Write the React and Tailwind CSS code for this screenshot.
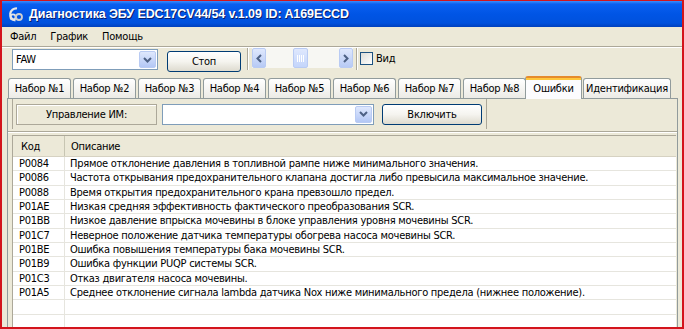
import React from "react";

const rows = [
  ["P0084", "Прямое отклонение давления в топливной рампе ниже минимального значения."],
  ["P0086", "Частота открывания предохранительного клапана достигла либо превысила максимальное значение."],
  ["P0088", "Время открытия предохранительного крана превзошло предел."],
  ["P01AE", "Низкая средняя эффективность фактического преобразования SCR."],
  ["P01BB", "Низкое давление впрыска мочевины в блоке управления уровня мочевины SCR."],
  ["P01C7", "Неверное положение датчика температуры обогрева насоса мочевины SCR."],
  ["P01BE", "Ошибка повышения температуры бака мочевины SCR."],
  ["P01B9", "Ошибка функции PUQP системы SCR."],
  ["P01C3", "Отказ двигателя насоса мочевины."],
  ["P01A5", "Среднее отклонение сигнала lambda датчика Nox ниже минимального предела (нижнее положение)."],
  ["", ""],
  ["", ""],
  ["", ""],
];

const tabs = ["Набор №1", "Набор №2", "Набор №3", "Набор №4", "Набор №5", "Набор №6", "Набор №7", "Набор №8"];

function DropBtn() {
  return (
    <div className="w-[17px] h-[17px] rounded-[2px] border border-[#b9cbf3] bg-linear-to-b from-[#dfe8fd] to-[#b3c7f5] flex items-center justify-center">
      <svg width="9" height="6" viewBox="0 0 9 6">
        <path d="M1 1 L4.5 4.5 L8 1" stroke="#4d6185" strokeWidth="2" fill="none" />
      </svg>
    </div>
  );
}

function Combo({ w, text }) {
  return (
    <div className={`${w} h-[21px] border border-[#7f9db9] bg-white flex items-center justify-between pl-[3px] pr-[1px]`}>
      <span>{text}</span>
      <DropBtn />
    </div>
  );
}

function XpButton({ w, children }) {
  return (
    <div className={`${w} h-[21px] rounded-[3px] border border-[#003c74] bg-linear-to-b from-white via-[#f5f4ef] to-[#dedbcf] flex items-center justify-center`}>
      {children}
    </div>
  );
}

function ArrowBtn({ dir }) {
  return (
    <div className="w-[14px] h-[20px] rounded-[2px] border border-[#b9cbf3] bg-linear-to-b from-[#dfe8fd] to-[#b7caf5] flex items-center justify-center">
      <svg width="6" height="9" viewBox="0 0 6 9">
        {dir === "l" ? (
          <path d="M5 1 L1.5 4.5 L5 8" stroke="#4d6185" strokeWidth="2" fill="none" />
        ) : (
          <path d="M1 1 L4.5 4.5 L1 8" stroke="#4d6185" strokeWidth="2" fill="none" />
        )}
      </svg>
    </div>
  );
}

function Sep() {
  return <div className="w-[2px] h-[22px] border-l border-[#aca899] border-r border-r-white" />;
}

export default function App() {
  return (
    <div className="w-[684px] h-[329px] overflow-hidden border-l-2 border-r-2 border-b-2 border-t border-[#d3141c] bg-[#ece9d8] flex flex-col text-[11px] tracking-[-0.25px] text-black font-['DejaVu_Sans_Condensed','Liberation_Sans',sans-serif] leading-none">
      {/* Title bar */}
      <div className="h-[26px] shrink-0 flex items-center bg-[linear-gradient(to_bottom,#3d8dfb_0%,#0a5ff0_12%,#0055e5_50%,#0051dd_85%,#0040bd_100%)]">
        <svg className="ml-[5px]" width="17" height="17" viewBox="0 0 17 17">
          <path d="M10 2.5 A6 6 0 1 0 8.5 14.5" stroke="#e6e6e6" strokeWidth="2.2" fill="none" />
          <circle cx="6" cy="11" r="2.6" stroke="#e6e6e6" strokeWidth="1.8" fill="none" />
          <circle cx="12" cy="11" r="3" stroke="#d0d0d0" strokeWidth="1.8" fill="none" />
        </svg>
        <span className="ml-[5px] text-white font-bold text-[12.5px] tracking-[-0.1px] font-['Liberation_Sans',sans-serif] [text-shadow:1px_1px_0_#0a1e6a]">
          Диагностика ЭБУ EDC17CV44/54 v.1.09 ID: A169ECCD
        </span>
      </div>
      {/* Menu */}
      <div className="h-[19px] shrink-0 flex items-center gap-[14px] pl-[8px]">
        <span>Файл</span>
        <span>График</span>
        <span>Помощь</span>
      </div>
      <div className="h-[2px] shrink-0 border-t border-[#aca899] border-b border-b-white" />
      {/* Toolbar */}
      <div className="h-[28px] shrink-0 flex items-start">
        <div className="ml-[10px] mt-[1px]">
          <Combo w="w-[146px]" text="FAW" />
        </div>
        <div className="ml-[9px] mt-[3px]">
          <XpButton w="w-[74px]">Стоп</XpButton>
        </div>
        <div className="ml-[6px]">
          <Sep />
        </div>
        <div className="ml-[3px] w-[101px] h-[20px] flex bg-[#f7f7f3]">
          <ArrowBtn dir="l" />
          <div className="flex-1 flex items-center pl-[27px]">
            <div className="w-[15px] h-[20px] rounded-[2px] border border-[#b9cbf3] bg-linear-to-b from-[#dfe8fd] to-[#c4d5fb] flex items-center justify-center gap-[1px]">
              <div className="w-px h-[7px] bg-white" />
              <div className="w-px h-[7px] bg-white" />
              <div className="w-px h-[7px] bg-white" />
              <div className="w-px h-[7px] bg-white" />
            </div>
          </div>
          <ArrowBtn dir="r" />
        </div>
        <div className="ml-[3px]">
          <Sep />
        </div>
        <div className="ml-[2px] mt-[4px] flex items-center">
          <div className="w-[13px] h-[13px] border border-[#1c5180] bg-linear-to-br from-[#dcdcd7] to-white" />
          <span className="ml-[3px]">Вид</span>
        </div>
      </div>
      {/* Tabs */}
      <div className="h-[22px] shrink-0 flex items-end pl-[6px] relative z-10">
        <div className="flex items-end gap-[2px]">
          {tabs.map((t) => (
            <div
              key={t}
              className="w-[63px] h-[20px] rounded-t-[3px] border border-b-0 border-[#919b9c] bg-linear-to-b from-white to-[#ecebe6] flex items-center justify-center"
            >
              {t}
            </div>
          ))}
        </div>
        <div className="-ml-[1px] -mb-[1px] w-[57px] h-[23px] rounded-t-[3px] border-x border-[#919b9c] border-t-2 border-t-[#e68b2c] bg-[#fcfcfe] flex flex-col">
          <div className="h-[2px] bg-[#ffc73c]" />
          <div className="flex-1 flex items-center justify-center pb-[3px]">Ошибки</div>
        </div>
        <div className="ml-[1px] w-[88px] h-[20px] rounded-t-[3px] border border-b-0 border-[#919b9c] bg-linear-to-b from-white to-[#ecebe6] flex items-center justify-center">
          Идентификация
        </div>
      </div>
      {/* Tab panel */}
      <div className="ml-[5px] w-[671px] flex-1 border border-b-0 border-[#919b9c] flex flex-col min-h-0">
        <div className="ml-[4px] w-[475px] h-[30px] shrink-0 border-l border-r border-[#aca899] flex items-center pl-[3px]">
          <div className="w-[141px] h-[21px] border border-[#aca899] shadow-[inset_1px_1px_0_#fff] flex items-center justify-center">
            Управление ИМ:
          </div>
          <div className="ml-[5px]">
            <Combo w="w-[212px]" text="" />
          </div>
          <div className="ml-[8px]">
            <XpButton w="w-[100px]">Включить</XpButton>
          </div>
        </div>
        <div className="mt-[2px] h-[2px] shrink-0 border-t border-[#aca899] border-b border-b-white" />
        <div className="ml-[4px] mt-[2px] w-[664px] flex-1 min-h-0 border-l border-t border-[#aca899] bg-white overflow-hidden">
          <div className="h-[21px] flex bg-[#ece9d8] border-b border-[#d6d2c2]">
            <div className="w-[52px] border-r border-[#c7c5b2] flex items-center pl-[8px]">Код</div>
            <div className="flex-1 flex items-center pl-[6px]">Описание</div>
          </div>
          {rows.map(([c, d], i) => (
            <div key={i} className="h-[14.33px] flex border-b border-[#e6e5de]">
              <div className="w-[52px] shrink-0 border-r border-[#e6e5de] flex items-center pl-[6px]">{c}</div>
              <div className="flex-1 flex items-center pl-[5px] whitespace-nowrap">{d}</div>
            </div>
          ))}
        </div>
      </div>
    </div>
  );
}
